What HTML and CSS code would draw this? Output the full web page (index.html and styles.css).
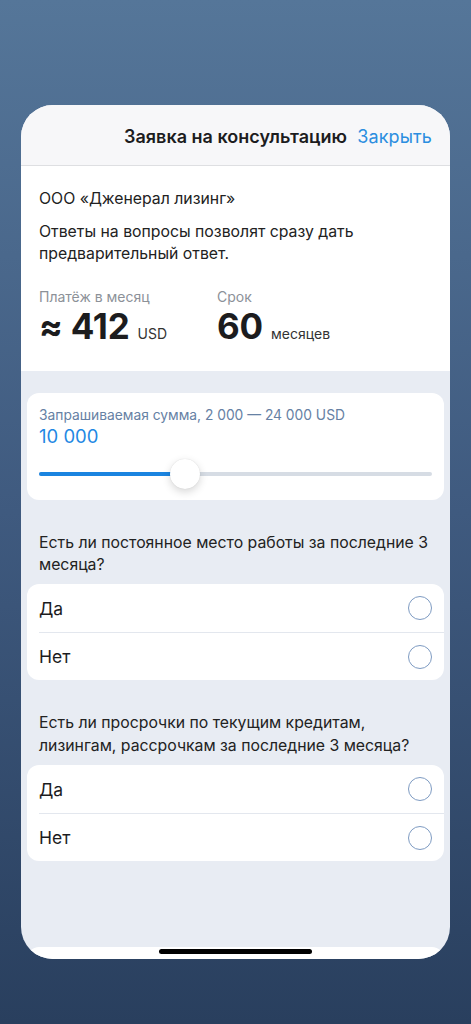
FILE: index.html
```html
<!DOCTYPE html>
<html lang="ru">
<head>
<meta charset="utf-8">
<title>Заявка на консультацию</title>
<link rel="stylesheet" href="styles.css">
</head>
<body>
<div class="modal">
  <header class="modal-header">
    <span class="spacer"></span>
    <h1 class="title">Заявка на консультацию</h1>
    <button class="close">Закрыть</button>
  </header>
  <div class="modal-body">
    <section class="summary">
      <p class="company">ООО «Дженерал лизинг»</p>
      <p class="intro">Ответы на вопросы позволят сразу дать предварительный ответ.</p>
      <div class="stats">
        <div class="stat stat-pay">
          <div class="stat-label">Платёж в месяц</div>
          <div class="stat-value"><b>≈ 412</b><span class="unit">USD</span></div>
        </div>
        <div class="stat">
          <div class="stat-label">Срок</div>
          <div class="stat-value"><b>60</b><span class="unit">месяцев</span></div>
        </div>
      </div>
    </section>

    <section class="card slider-card">
      <div class="slider-label">Запрашиваемая сумма, 2 000 — 24 000 USD</div>
      <div class="slider-value">10 000</div>
      <div class="slider">
        <div class="track"><div class="fill" style="width: 37.2%"></div></div>
        <div class="thumb" style="left: 37.2%"></div>
      </div>
    </section>

    <p class="question q1">Есть ли постоянное место работы за последние 3 месяца?</p>
    <div class="card options">
      <label class="option"><span>Да</span><i class="radio"></i></label>
      <label class="option"><span>Нет</span><i class="radio"></i></label>
    </div>

    <p class="question q2">Есть ли просрочки по текущим кредитам, лизингам, рассрочкам за последние 3 месяца?</p>
    <div class="card options">
      <label class="option"><span>Да</span><i class="radio"></i></label>
      <label class="option"><span>Нет</span><i class="radio"></i></label>
    </div>

    <div class="card options next">
      <label class="option"><span></span><i class="radio"></i></label>
    </div>
  </div>
  <div class="home-indicator"></div>
</div>
</body>
</html>
```

FILE: styles.css
```css
* { box-sizing: border-box; }
html, body { margin: 0; padding: 0; }
body {
  width: 471px;
  height: 1024px;
  overflow: hidden;
  background: linear-gradient(180deg, #557699 0%, #3f5a7f 50%, #293f5e 100%);
  font-family: "Inter", "Roboto", "Liberation Sans", sans-serif;
  color: #1f1f1f;
  padding: 105px 21px 0;
}
p { margin: 0; }

.modal {
  position: relative;
  width: 429px;
  height: 854px;
  border-radius: 32px;
  overflow: hidden;
  background: #e8ecf3;
  display: flex;
  flex-direction: column;
}

.modal-header {
  height: 61px;
  flex: none;
  background: #f7f7f9;
  border-bottom: 1px solid #dedfe2;
  display: grid;
  grid-template-columns: 1fr auto 1fr;
  align-items: center;
  padding: 2px 18px 0;
}
.title {
  margin: 0;
  font-size: 18px;
  font-weight: 600;
  color: #1c1c1e;
  letter-spacing: 0;
}
.close {
  justify-self: end;
  border: 0;
  background: none;
  padding: 0;
  font: inherit;
  font-size: 18px;
  color: #2b8ee0;
  letter-spacing: 0.1px;
}

.modal-body {
  flex: 1;
  display: flex;
  flex-direction: column;
}

.summary {
  background: #ffffff;
  padding: 22px 18px 25px;
}
.company, .intro {
  font-size: 15.8px;
  line-height: 22px;
  color: #222;
}
.intro { margin-top: 11px; }

.stats {
  display: flex;
  margin-top: 23px;
}
.stat-pay { width: 178px; }
.stat-label {
  font-size: 14px;
  line-height: 18px;
  color: #8c9198;
}
.stat-value {
  display: flex;
  align-items: baseline;
  height: 40px;
  line-height: 40px;
  color: #1c1c1e;
}
.stat-value b {
  font-size: 35px;
  font-weight: 700;
  letter-spacing: -0.2px;
}
.unit {
  font-size: 14px;
  margin-left: 8px;
  color: #333;
}

.card {
  background: #ffffff;
  border-radius: 12px;
  margin: 0 6px;
}

.slider-card {
  margin-top: 22px;
  padding: 13px 12px 11px;
}
.slider-label {
  font-size: 13.8px;
  line-height: 18px;
  color: #6681a4;
}
.slider-value {
  font-size: 18.5px;
  line-height: 22px;
  color: #1f88e3;
  margin-top: 1px;
}
.slider {
  position: relative;
  height: 30px;
  margin-top: 12px;
  display: flex;
  align-items: center;
}
.track {
  width: 100%;
  height: 4px;
  border-radius: 2px;
  background: #d6dce4;
  overflow: hidden;
}
.fill {
  height: 100%;
  background: #1a84e0;
}
.thumb {
  position: absolute;
  top: 0;
  width: 30px;
  height: 30px;
  margin-left: -15px;
  border-radius: 50%;
  background: #ffffff;
  box-shadow: 0 3px 8px rgba(0, 0, 0, 0.16), 0 0 1px rgba(0, 0, 0, 0.15);
}

.question {
  font-size: 15.8px;
  line-height: 22px;
  color: #222;
  padding: 0 8px 0 18px;
  margin-bottom: 8px;
  letter-spacing: 0;
}
.q1 { margin-top: 32px; }
.q2 { margin-top: 31px; line-height: 23px; }

.option {
  display: flex;
  align-items: center;
  justify-content: space-between;
  height: 48px;
  margin-left: 12px;
  padding-right: 12px;
  font-size: 17.5px;
  color: #1c1c1e;
}
.option + .option { border-top: 1px solid #e3e7ee; height: 48px; }
.radio {
  width: 24px;
  height: 24px;
  border-radius: 50%;
  border: 1.5px solid #7e9bc2;
}
.next { margin-top: 86px; }

.home-indicator {
  position: absolute;
  left: 138px;
  bottom: 5px;
  width: 153px;
  height: 5px;
  border-radius: 3px;
  background: #000;
}
```
